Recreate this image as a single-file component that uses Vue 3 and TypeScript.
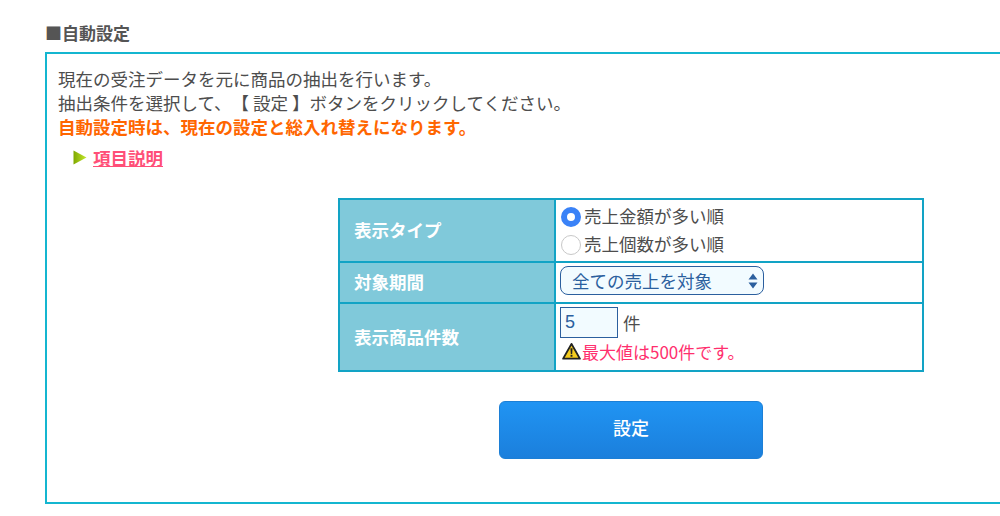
<script setup lang="ts">
import { ref } from 'vue';

const displayType = ref('amount');
const period = ref('all');
const itemCount = ref('5');

const typeOptions = [
  { value: 'amount', label: '売上金額が多い順' },
  { value: 'count', label: '売上個数が多い順' },
];
</script>

<template>
  <div class="page">
    <h2 class="heading">■自動設定</h2>
    <section class="panel">
      <p class="lead">現在の受注データを元に商品の抽出を行います。</p>
      <p class="lead">抽出条件を選択して、【 設定 】ボタンをクリックしてください。</p>
      <p class="lead notice">自動設定時は、現在の設定と総入れ替えになります。</p>
      <div class="help">
        <svg class="help-arrow" width="14" height="15" viewBox="0 0 14 15">
          <defs>
            <linearGradient id="arrowFill" x1="0" y1="0" x2="1" y2="0">
              <stop offset="0" stop-color="#7fa800" />
              <stop offset="1" stop-color="#c4e82c" />
            </linearGradient>
          </defs>
          <path d="M0.5 0.5 L13.5 7.5 L0.5 14.5 Z" fill="url(#arrowFill)" />
        </svg>
        <a class="help-link" href="#">項目説明</a>
      </div>

      <table class="settings">
        <tbody>
          <tr class="row-type">
            <th>表示タイプ</th>
            <td>
              <label v-for="opt in typeOptions" :key="opt.value" class="radio-line">
                <input v-model="displayType" type="radio" name="type" :value="opt.value" />
                <span class="radio-text">{{ opt.label }}</span>
              </label>
            </td>
          </tr>
          <tr class="row-period">
            <th>対象期間</th>
            <td>
              <div class="select-wrap">
                <select v-model="period">
                  <option value="all">全ての売上を対象</option>
                </select>
                <svg class="select-arrows" width="10" height="16" viewBox="0 0 10 16">
                  <path d="M5 0.5 L9.5 6.5 H0.5 Z M5 15.5 L9.5 9.5 H0.5 Z" fill="#2b5f9e" />
                </svg>
              </div>
            </td>
          </tr>
          <tr class="row-count">
            <th>表示商品件数</th>
            <td>
              <div class="count-line">
                <input v-model="itemCount" class="count-input" type="text" />
                <span>件</span>
              </div>
              <div class="warning">
                <svg width="19" height="19" viewBox="0 0 20 19">
                  <path d="M10 1.5 L18.8 17 H1.2 Z" fill="#f5cc1e" stroke="#222" stroke-width="2" stroke-linejoin="round" />
                  <path d="M8.9 6 H11.1 L10.7 12 H9.3 Z" fill="#222" />
                  <rect x="9" y="13" width="2" height="2" fill="#222" />
                </svg>
                <span>最大値は500件です。</span>
              </div>
            </td>
          </tr>
        </tbody>
      </table>

      <div class="actions">
        <button class="submit" type="button">設定</button>
      </div>
    </section>
  </div>
</template>

<style>
html,
body {
  margin: 0;
  background: #fff;
  overflow: hidden;
}
</style>

<style scoped>
.page {
  width: 1000px;
  height: 516px;
  overflow: hidden;
  padding: 23px 0 0 45px;
  box-sizing: border-box;
  font-family: "Noto Sans CJK JP", "Liberation Sans", sans-serif;
  color: #4d4d4d;
  text-spacing-trim: space-all;
}
.heading {
  margin: 0 0 10px 0;
  font-size: 17px;
  line-height: 19px;
  font-weight: 700;
  color: #555;
}
.panel {
  width: 1000px;
  height: 452px;
  box-sizing: border-box;
  border: 2px solid #14b6d0;
  padding: 13px 0 0 11px;
}
.lead {
  margin: 0;
  font-size: 17.5px;
  line-height: 24px;
}
.notice {
  color: #ff6600;
  font-weight: 700;
}
.help {
  display: flex;
  align-items: center;
  gap: 6px;
  margin: 6px 0 0 15px;
  height: 24px;
}
.help-link {
  color: #ff4f78;
  font-size: 17.5px;
  font-weight: 700;
  text-decoration: underline;
}
.settings {
  width: 586px;
  margin: 29px 0 0 280px;
  border-collapse: collapse;
  font-size: 17.5px;
}
.settings th,
.settings td {
  border: 2px solid #12a3c5;
  padding: 0;
}
.settings th {
  width: 200px;
  padding: 0 0 2px 14px;
  background: #80c9da;
  color: #fff;
  font-weight: 700;
  text-align: left;
}
.settings td {
  padding: 3px 0 0 4px;
  vertical-align: top;
}
.row-type {
  height: 63px;
}
.row-period {
  height: 41px;
}
.row-count {
  height: 68px;
}
.radio-line {
  display: flex;
  align-items: center;
  height: 28px;
}
.radio-text {
  padding-bottom: 4px;
}
.radio-line input {
  appearance: none;
  width: 20px;
  height: 20px;
  margin: 0 3px 0 1px;
  border: 1px solid #c8c8c8;
  border-radius: 50%;
  background: #fff;
  box-sizing: border-box;
}
.radio-line input:checked {
  border: 6px solid #3a82f7;
  background: #fff;
}
.select-wrap {
  position: relative;
  width: 204px;
}
select {
  appearance: none;
  display: block;
  width: 100%;
  height: 29px;
  box-sizing: border-box;
  padding: 0 0 0 11px;
  border: 1px solid #2b5f9e;
  border-radius: 8px;
  background: #f2fbff;
  color: #2b5f9e;
  font-family: inherit;
  font-size: 17.5px;
}
.select-arrows {
  position: absolute;
  right: 6px;
  top: 7px;
}
.count-line {
  display: flex;
  align-items: center;
  gap: 5px;
}
.count-input {
  width: 58px;
  height: 31px;
  box-sizing: border-box;
  padding: 0 4px;
  border: 1px solid #2b5f9e;
  background: #f2fbff;
  color: #2b5f9e;
  font-family: "Liberation Sans", sans-serif;
  font-size: 18px;
}
.warning {
  display: flex;
  align-items: center;
  gap: 1px;
  margin: 1px 0 0 2px;
  height: 24px;
  color: #ff2f6e;
  font-size: 17px;
}
.actions {
  display: flex;
  justify-content: flex-start;
  margin: 29px 0 0 441px;
}
.submit {
  width: 264px;
  height: 58px;
  border: 1px solid #1c7fd6;
  border-radius: 6px;
  background: linear-gradient(#2094f3, #1b7fdc);
  color: #fff;
  font-family: inherit;
  font-size: 18px;
  font-weight: 500;
  padding: 0 0 6px;
}
</style>
